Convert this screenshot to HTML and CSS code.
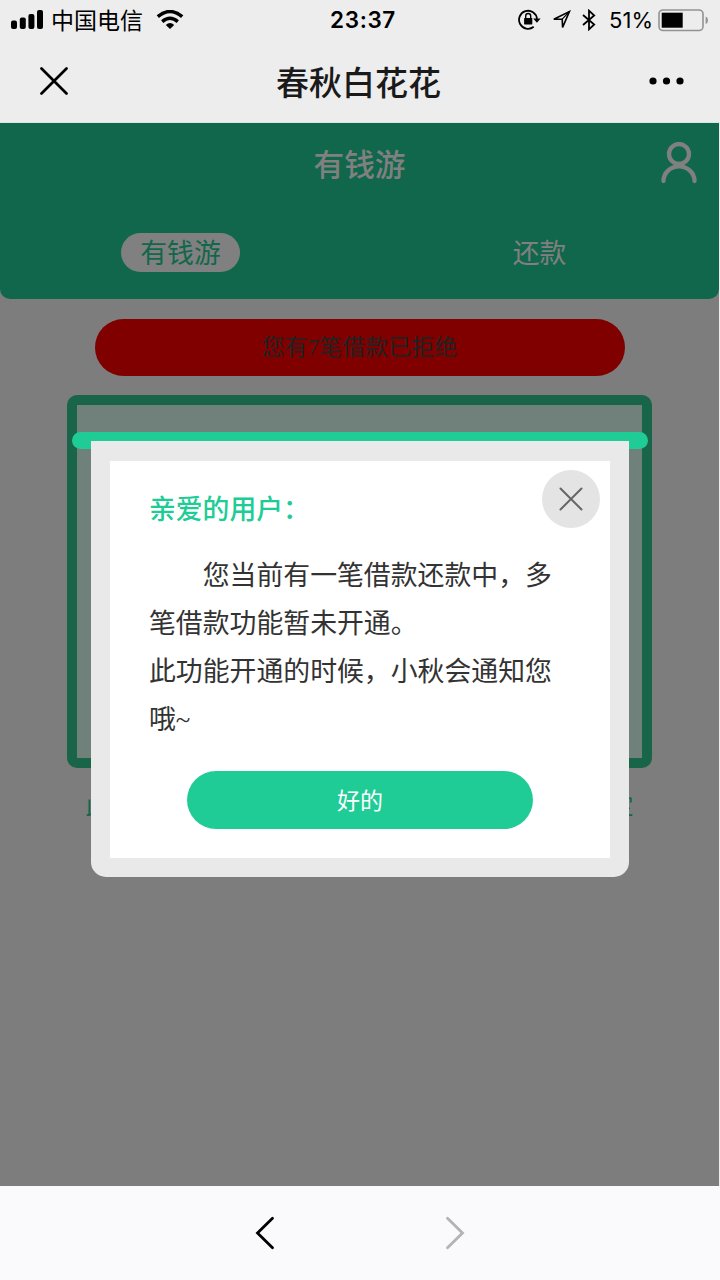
FILE: index.html
```html
<!DOCTYPE html>
<html lang="zh-CN">
<head>
<meta charset="utf-8">
<title>春秋白花花</title>
<link rel="stylesheet" href="styles.css">
</head>
<body>
<div class="screen">
  <header class="chrome">
    <div class="status">
      <div class="status-left">
        <svg class="signal" width="33" height="20" viewBox="0 0 33 20"><rect x="0" y="10.5" width="6" height="8.5" rx="2"/><rect x="8.8" y="7.5" width="6" height="11.5" rx="2"/><rect x="17.4" y="4" width="6" height="15" rx="2"/><rect x="26" y="0" width="6" height="19" rx="2"/></svg>
        <span class="carrier">中国电信</span>
        <svg class="wifi" width="28" height="20" viewBox="0 0 28 20"><path d="M1.8 6.7Q14 -3.6 26.2 6.7" fill="none" stroke="#000" stroke-width="3.5"/><path d="M6.2 11.6Q14 5 21.8 11.6" fill="none" stroke="#000" stroke-width="3.4"/><path d="M9.8 14.9Q14 11.3 18.2 14.9L14 19Z"/></svg>
      </div>
      <span class="clock">23:37</span>
      <div class="status-right">
        <svg class="lock" width="24" height="22" viewBox="0 0 24 22"><path d="M15.7 17.8A9 9 0 1 1 19 9.8" fill="none" stroke="#000" stroke-width="1.8"/><path d="M15.2 9.4H22.6L18.9 13.8Z"/><rect x="6.1" y="9" width="8.2" height="6.4" rx=".6"/><path d="M7.7 9V7a2.5 2.5 0 0 1 5 0V9" fill="none" stroke="#000" stroke-width="1.4"/></svg>
        <svg class="locate" width="19" height="20" viewBox="0 0 19 20"><path d="M1.8 9.2L17.4 1.6L10.6 17.4L10.2 9.2Z" fill="none" stroke="#000" stroke-width="1.6"/><path d="M17.4 1.6L10.2 9.2" stroke="#000" stroke-width="1.2"/></svg>
        <svg class="bluetooth" width="14" height="22" viewBox="0 0 14 22"><path d="M1 6L12.2 15.5L7 20.3V1.7L12.2 6.5L1 16" fill="none" stroke="#000" stroke-width="1.8"/></svg>
        <span class="percent">51%</span>
        <svg width="51" height="23" viewBox="0 0 51 23"><rect x="1" y="1" width="44" height="20.5" rx="4" fill="none" stroke="#929292" stroke-width="1.6"/><rect x="3.7" y="3.7" width="21" height="15"/><path d="M47.6 7.6Q50 8.5 50 11.2Q50 14 47.6 15Z" fill="#929292"/></svg>
      </div>
    </div>
    <div class="titlebar">
      <svg width="28" height="28" viewBox="0 0 28 28"><path d="M1.5 1.5L26.5 26.5M26.5 1.5L1.5 26.5" stroke="#000" stroke-width="2.7" stroke-linecap="round"/></svg>
      <h1 class="page-title">春秋白花花</h1>
      <svg width="36" height="8" viewBox="0 0 36 8"><circle cx="4" cy="4" r="3.6"/><circle cx="17.5" cy="4" r="3.6"/><circle cx="31" cy="4" r="3.6"/></svg>
    </div>
  </header>
  <main class="page">
    <section class="hero">
      <div class="hero-top">
        <h2 class="brand">有钱游</h2>
        <svg class="user" width="36" height="42" viewBox="0 0 36 42"><circle cx="18" cy="12" r="10" fill="none" stroke="#808080" stroke-width="4.3"/><path d="M2.5 39A15.5 14.6 0 0 1 33.5 39" fill="none" stroke="#808080" stroke-width="4.3" stroke-linecap="round"/></svg>
      </div>
      <nav class="tabs">
        <div class="tab"><span class="pill">有钱游</span></div>
        <div class="tab">还款</div>
      </nav>
    </section>
    <div class="alert">您有7笔借款已拒绝</div>
    <div class="card"></div>
    <div class="note"><span>此</span><span>定</span></div>
    <div class="slot"></div>
    <section class="dialog">
      <svg class="close" width="58" height="58" viewBox="0 0 58 58"><circle cx="29" cy="29" r="29" fill="#e4e4e4"/><path d="M18.5 18.5L39.5 39.5M39.5 18.5L18.5 39.5" stroke="#666" stroke-width="2" stroke-linecap="round"/></svg>
      <h3 class="greeting">亲爱的用户：</h3>
      <p class="message first">您当前有一笔借款还款中，多笔借款功能暂未开通。</p>
      <p class="message">此功能开通的时候，小秋会通知您哦~</p>
      <button class="confirm">好的</button>
    </section>
  </main>
  <footer class="toolbar">
    <svg width="20" height="34" viewBox="0 0 20 34"><path d="M17.5 2.2L2.5 17L17.5 31.8" fill="none" stroke="#000" stroke-width="2.8" stroke-linecap="round"/></svg>
    <svg width="20" height="34" viewBox="0 0 20 34"><path d="M2.5 2.2L17.5 17L2.5 31.8" fill="none" stroke="#b3b3b3" stroke-width="2.8" stroke-linecap="round"/></svg>
  </footer>
</div>
</body>
</html>
```
FILE: styles.css
```css
* { box-sizing: border-box; margin: 0; padding: 0; }
body { background: #ededed; font-family: "Noto Sans CJK SC", sans-serif; color: #333; }
svg { display: block; flex: none; }
.screen { width: 720px; height: 1280px; display: flex; flex-direction: column; overflow: hidden; }
.chrome { height: 123px; background: #ededed; color: #000; border-bottom: 1px solid #d5e9e1; }
.status { height: 40px; display: grid; grid-template-columns: 1fr auto 1fr; align-items: center; padding: 0 11px 0 17px; }
.status-left, .status-right { display: flex; align-items: center; }
.status-left { margin-left: -6px; }
.status-right { justify-content: flex-end; }
.carrier { font-size: 23px; line-height: 38px; margin: 0 13px 2px 7px; }
.clock { font-family: Inter, sans-serif; font-size: 22.5px; font-weight: 600; letter-spacing: .6px; line-height: 40px; }
.lock { margin-right: -1px; }
.locate { margin-left: 11px; }
.bluetooth { margin: 0 13px 0 11px; }
.percent { font-family: Inter, sans-serif; font-size: 22px; line-height: 40px; margin-right: 5px; }
.titlebar { height: 83px; display: flex; align-items: center; justify-content: space-between; padding: 0 35px 2px 40px; }
.page-title { font-size: 33px; line-height: 48px; font-weight: 500; color: #1a1a1a; }
.page { position: relative; width: 719px; height: 1063px; background: #7d7d7d; }
.hero { height: 176px; background: #11674b; border-radius: 0 0 10px 10px; color: #808080; }
.hero-top { height: 82px; display: grid; grid-template-columns: 1fr auto 1fr; align-items: center; padding-bottom: 2px; }
.brand { grid-column: 2; font-size: 30.7px; line-height: 46px; font-weight: 500; }
.user { justify-self: end; margin-right: 22px; }
.tabs { height: 94px; display: flex; padding: 28px 0 0 1px; font-size: 26.8px; line-height: 38px; }
.tab { flex: 1; display: flex; justify-content: center; height: 40px; }
.pill { width: 119px; height: 39px; border-radius: 20px; background: #808080; color: #11674b; text-align: center; line-height: 37px; }
.alert { width: 530px; height: 57px; margin: 20px auto 0; border-radius: 29px; background: #800000; color: #222; font-family: "Liberation Serif", "Noto Sans CJK SC", serif; font-size: 23px; line-height: 58px; text-align: center; }
.card { width: 585px; height: 373px; margin: 19px auto 0; background: #18654a; border-radius: 10px; padding: 10px; }
.card::before { content: ""; display: block; height: 353px; background: #70807a; }
.note { width: 548px; margin: 18px auto 0; display: flex; justify-content: space-between; color: #11674b; font-size: 23px; line-height: 36px; }
.slot { position: absolute; left: 72px; top: 309px; width: 576px; height: 17px; border-radius: 9px; background: #20cc96; }
.dialog { position: absolute; left: 91px; top: 318px; width: 538px; height: 436px; border: 19px solid #e9e9e9; border-top-width: 20px; border-radius: 0 0 15px 15px; background: #fff; padding: 27px 39px 0; }
.close { position: absolute; right: 10px; top: 9px; }
.greeting { font-size: 26.8px; line-height: 40px; font-weight: 500; color: #20cc96; margin-bottom: 24px; }
.message { width: 404px; font-family: "Liberation Serif", "Noto Sans CJK SC", serif; font-size: 26.86px; line-height: 48px; }
.first { text-indent: 2em; }
.confirm { display: block; width: 346px; height: 58px; margin: 27px auto 0 38px; padding-bottom: 2px; border: 0; border-radius: 29px; background: #20cc96; color: #fff; font-family: inherit; font-size: 23px; }
.toolbar { height: 94px; background: #fafafc; display: flex; justify-content: center; align-items: center; gap: 170px; }
```
